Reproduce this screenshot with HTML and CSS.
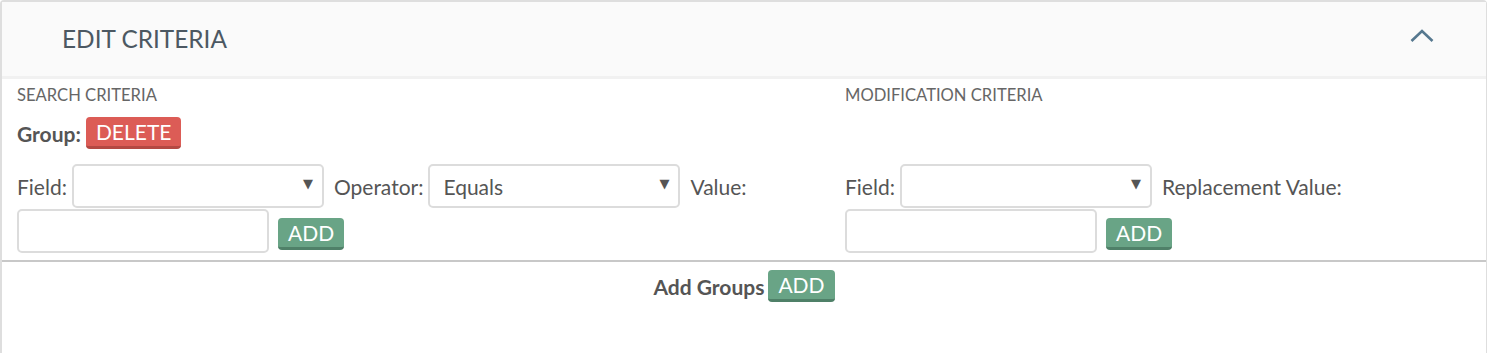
FILE: index.html
```html
<!DOCTYPE html>
<html lang="en">
<head>
    <meta charset="UTF-8">
    <title>Edit Criteria</title>
    <link rel="stylesheet" href="styles.css">
</head>
<body>

<div class="panel">
    <div class="panel-head">
        <h2>Edit Criteria</h2>
        <svg class="chevron" width="24" height="14" viewBox="0 0 24 14">
            <polyline points="1.5,12 12,2 22.5,12" fill="none" stroke="#56788f" stroke-width="2.6"/>
        </svg>
    </div>

    <div class="criteria">
        <div class="col">
            <h3>Search Criteria</h3>
            <div class="group-row">
                <b>Group:</b>
                <button class="btn btn-red">DELETE</button>
            </div>
            <div class="form-row">
                <label>Field:</label>
                <span class="select"><select><option></option></select></span>
                <label class="spaced">Operator:</label>
                <span class="select"><select><option>Equals</option></select></span>
                <label class="spaced">Value:</label>
                <input type="text">
                <button class="btn btn-green">ADD</button>
            </div>
        </div>

        <div class="col">
            <h3>Modification Criteria</h3>
            <div class="group-row"></div>
            <div class="form-row">
                <label>Field:</label>
                <span class="select"><select><option></option></select></span>
                <label class="spaced">Replacement Value:</label>
                <input type="text">
                <button class="btn btn-green">ADD</button>
            </div>
        </div>
    </div>

    <div class="add-groups">
        <b>Add Groups</b>
        <button class="btn btn-green">ADD</button>
    </div>
</div>

</body>
</html>
```

FILE: styles.css
```css
* {
    margin: 0;
    padding: 0;
    box-sizing: border-box;
}

body {
    font-family: 'Lato', sans-serif;
    font-size: 21px;
    color: #555;
    background: #fff;
    height: 353px;
    overflow: hidden;
}

.panel {
    height: 100%;
    border: 2px solid #dedede;
    border-bottom: none;
    border-right: 1px solid #dedede;
    border-radius: 4px 4px 0 0;
}

.panel-head {
    display: flex;
    justify-content: space-between;
    align-items: center;
    height: 77px;
    padding: 0 52px 0 60px;
    background: #fafafa;
    border-bottom: 3px solid #f1f1f1;
}

.panel-head h2 {
    font-size: 24.4px;
    font-weight: 400;
    text-transform: uppercase;
    color: #4c5862;
    margin-top: -2px;
}

.chevron {
    margin-top: -6px;
}

.criteria {
    display: grid;
    grid-template-columns: 828px 1fr;
    padding: 6px 0 7px 15px;
    border-bottom: 2px solid #c8c8c8;
}

h3 {
    font-size: 16.6px;
    font-weight: 400;
    text-transform: uppercase;
    color: #666;
    line-height: 20px;
}

.group-row {
    display: flex;
    align-items: center;
    gap: 5px;
    height: 32px;
    margin-top: 12px;
}

.form-row {
    display: flex;
    flex-wrap: wrap;
    align-items: center;
    row-gap: 1px;
    margin-top: 15px;
}

.form-row label {
    margin-right: 5px;
}

.form-row .spaced {
    margin-left: 10px;
}

.form-row .btn {
    margin-top: 6px;
}

.select {
    position: relative;
    display: inline-block;
}

.select::after {
    content: "\25BC";
    position: absolute;
    right: 11px;
    top: 12px;
    font-family: 'DejaVu Sans', sans-serif;
    font-size: 13px;
    color: #555;
    pointer-events: none;
}

select,
input {
    width: 252px;
    height: 44px;
    border: 2px solid #dcdcdc;
    border-radius: 5px;
    background: #fff;
    font-family: 'Lato', sans-serif;
    font-size: 21px;
    color: #555;
    outline: none;
}

select {
    -webkit-appearance: none;
    appearance: none;
    padding: 0 13px;
}

input {
    padding: 0 10px;
}

.btn {
    height: 32px;
    padding: 0 10px 1px;
    border: none;
    border-radius: 4px;
    color: #fff;
    font-family: 'Lato', sans-serif;
    font-size: 21px;
    cursor: pointer;
}

.btn-red {
    background: #dc5c56;
    border-bottom: 3px solid #b44943;
}

.btn-green {
    background: #69a486;
    border-bottom: 3px solid #4f8068;
    margin-left: 9px;
}

.add-groups {
    display: flex;
    justify-content: center;
    align-items: center;
    gap: 4px;
    margin-top: 8px;
}

.add-groups .btn {
    margin-left: 0;
}
```
